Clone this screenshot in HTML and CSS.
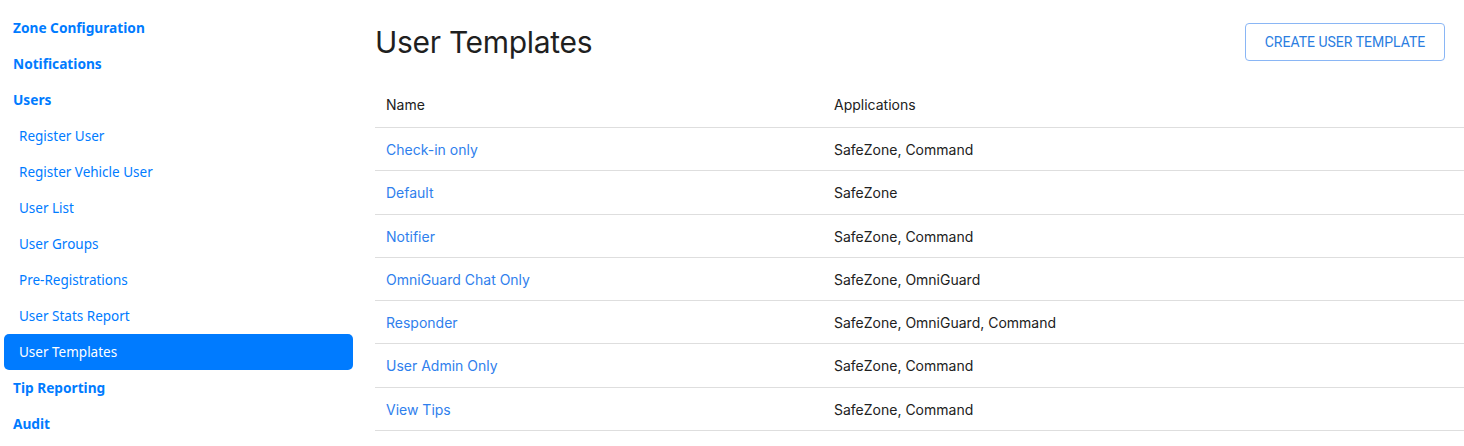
FILE: index.html
```html
<!DOCTYPE html>
<html lang="en">
<head>
    <meta charset="UTF-8">
    <title>User Templates</title>
    <link rel="stylesheet" href="styles.css">
</head>
<body>
    <div class="layout">
        <nav class="sidebar">
            <a class="nav-head" href="#">Zone Configuration</a>
            <a class="nav-head" href="#">Notifications</a>
            <a class="nav-head" href="#">Users</a>
            <a class="nav-sub" href="#">Register User</a>
            <a class="nav-sub" href="#">Register Vehicle User</a>
            <a class="nav-sub" href="#">User List</a>
            <a class="nav-sub" href="#">User Groups</a>
            <a class="nav-sub" href="#">Pre-Registrations</a>
            <a class="nav-sub" href="#">User Stats Report</a>
            <a class="nav-sub active" href="#">User Templates</a>
            <a class="nav-head" href="#">Tip Reporting</a>
            <a class="nav-head" href="#">Audit</a>
        </nav>

        <main class="content">
            <div class="page-header">
                <h1>User Templates</h1>
                <button class="btn-outline">CREATE USER TEMPLATE</button>
            </div>

            <table class="templates">
                <thead>
                    <tr>
                        <th class="col-name">Name</th>
                        <th>Applications</th>
                    </tr>
                </thead>
                <tbody>
                    <tr><td><a href="#">Check-in only</a></td><td>SafeZone, Command</td></tr>
                    <tr><td><a href="#">Default</a></td><td>SafeZone</td></tr>
                    <tr><td><a href="#">Notifier</a></td><td>SafeZone, Command</td></tr>
                    <tr><td><a href="#">OmniGuard Chat Only</a></td><td>SafeZone, OmniGuard</td></tr>
                    <tr><td><a href="#">Responder</a></td><td>SafeZone, OmniGuard, Command</td></tr>
                    <tr><td><a href="#">User Admin Only</a></td><td>SafeZone, Command</td></tr>
                    <tr><td><a href="#">View Tips</a></td><td>SafeZone, Command</td></tr>
                </tbody>
            </table>
        </main>
    </div>
</body>
</html>
```

FILE: styles.css
```css
body {
    margin: 0;
    background: #ffffff;
    color: #212529;
    font-family: "Noto Sans", "Open Sans", sans-serif;
    overflow: hidden;
}

.layout {
    display: flex;
    min-height: 100vh;
}

/* sidebar */
.sidebar {
    width: 349px;
    padding: 10px 0 0 4px;
    display: flex;
    flex-direction: column;
    flex-shrink: 0;
}

.sidebar a {
    display: block;
    height: 36px;
    line-height: 36px;
    font-size: 13.5px;
    color: #007bff;
    text-decoration: none;
    border-radius: 5px;
}

.sidebar a.nav-head {
    font-weight: 700;
    font-size: 13.7px;
    padding-left: 9px;
}

.nav-sub {
    padding-left: 15px;
}

.sidebar a.active {
    background-color: #007bff;
    color: #ffffff;
}

/* main */
.content {
    flex: 1;
    margin-left: 22px;
    font-family: Inter, Roboto, sans-serif;
}

.page-header {
    display: flex;
    justify-content: space-between;
    align-items: center;
    padding: 23px 19px 0 0;
    height: 38px;
}

.page-header h1 {
    margin: 0;
    font-size: 30px;
    font-weight: 400;
    color: #1f1f1f;
    letter-spacing: -0.3px;
}

.btn-outline {
    height: 38px;
    width: 200px;
    background: #ffffff;
    border: 1px solid #8ab6f5;
    border-radius: 4px;
    color: #2a7de1;
    font-family: Roboto, sans-serif;
    font-size: 14px;
    cursor: pointer;
}

.templates {
    width: 100%;
    margin-top: 20px;
    border-collapse: collapse;
    font-size: 14px;
}

.templates th {
    text-align: left;
    font-weight: 400;
    color: #212121;
    padding: 14px 11px 13px;
    line-height: 19px;
    border-bottom: 1px solid #dedede;
}

.templates .col-name {
    width: 426px;
}

.templates td {
    padding: 12px 11px 11px;
    line-height: 19.3px;
    border-bottom: 1px solid #dedede;
    color: #212121;
}

.templates td a {
    color: #2f80ed;
    text-decoration: none;
}
```
